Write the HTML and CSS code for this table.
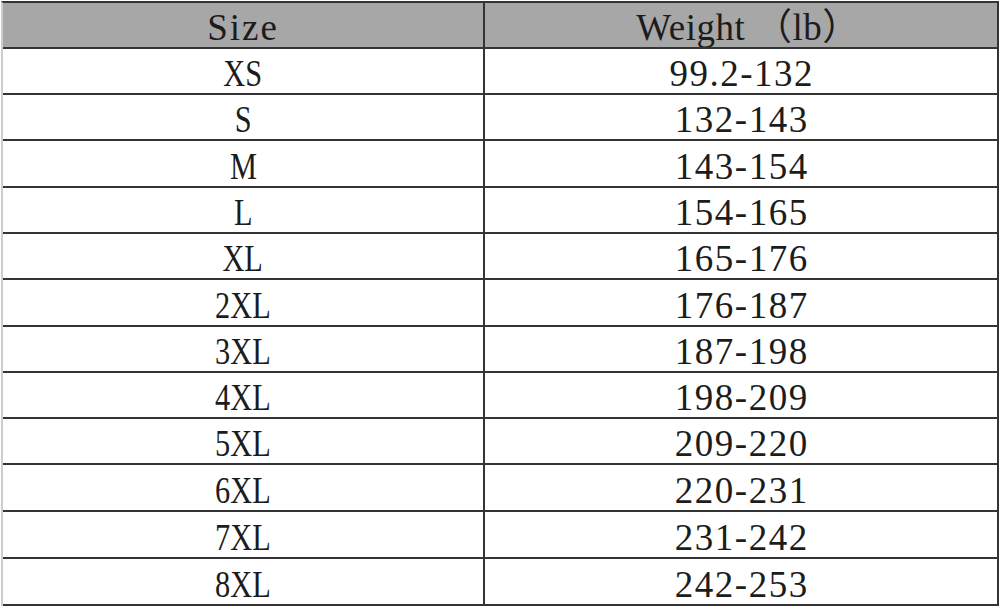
FILE: index.html
```html
<!DOCTYPE html>
<html lang="en">
<head>
<meta charset="utf-8">
<title>Size chart</title>
<link rel="stylesheet" href="styles.css">
</head>
<body>
<table class="chart">
  <thead>
    <tr class="head">
      <th class="c-size"><span class="h-size">Size</span></th>
      <th class="c-weight"><span class="h-weight">Weight （lb）</span></th>
    </tr>
  </thead>
  <tbody>
    <tr><td class="c-size"><span class="lbl">XS</span></td><td class="c-weight"><span class="num">99.2-132</span></td></tr>
    <tr><td class="c-size"><span class="lbl">S</span></td><td class="c-weight"><span class="num">132-143</span></td></tr>
    <tr class="tall"><td class="c-size"><span class="lbl">M</span></td><td class="c-weight"><span class="num">143-154</span></td></tr>
    <tr><td class="c-size"><span class="lbl">L</span></td><td class="c-weight"><span class="num">154-165</span></td></tr>
    <tr><td class="c-size"><span class="lbl">XL</span></td><td class="c-weight"><span class="num">165-176</span></td></tr>
    <tr class="tall"><td class="c-size"><span class="lbl">2XL</span></td><td class="c-weight"><span class="num">176-187</span></td></tr>
    <tr><td class="c-size"><span class="lbl">3XL</span></td><td class="c-weight"><span class="num">187-198</span></td></tr>
    <tr><td class="c-size"><span class="lbl">4XL</span></td><td class="c-weight"><span class="num">198-209</span></td></tr>
    <tr><td class="c-size"><span class="lbl">5XL</span></td><td class="c-weight"><span class="num">209-220</span></td></tr>
    <tr class="tall"><td class="c-size"><span class="lbl">6XL</span></td><td class="c-weight"><span class="num">220-231</span></td></tr>
    <tr class="tall"><td class="c-size"><span class="lbl">7XL</span></td><td class="c-weight"><span class="num">231-242</span></td></tr>
    <tr class="tall"><td class="c-size"><span class="lbl">8XL</span></td><td class="c-weight"><span class="num">242-253</span></td></tr>
  </tbody>
</table>
</body>
</html>
```
FILE: styles.css
```css
html, body {
  margin: 0;
  padding: 0;
  background: #ffffff;
}

.chart {
  margin: 1px 0 0 1px;
  width: 998px;
  border-collapse: separate;
  border-spacing: 0;
  border-top: 2px solid #343434;
  border-left: 2px solid #cdcdcd;
  table-layout: fixed;
  font-family: "Liberation Serif", "Noto Sans CJK SC", serif;
  font-size: 37px;
  color: #1c1c1c;
}

.chart th,
.chart td {
  box-sizing: border-box;
  height: 46px;
  padding: 5px 0 0;
  line-height: 39px;
  text-align: center;
  font-weight: normal;
  border-right: 2px solid #343434;
  border-bottom: 2px solid #343434;
  white-space: nowrap;
  overflow: hidden;
}

.chart .tall th,
.chart .tall td {
  height: 47px;
}

.chart .c-size {
  width: 482px;
}

.chart .c-weight {
  width: 514px;
}

.head th {
  background: #a7a7a7;
}

.h-size {
  letter-spacing: 2px;
}

.h-weight {
  letter-spacing: 0.5px;
  margin-left: 14px;
}

.lbl {
  display: inline-block;
  transform: scaleX(0.82);
}

.num {
  letter-spacing: 1.5px;
  margin-right: -1.5px;
}
```
